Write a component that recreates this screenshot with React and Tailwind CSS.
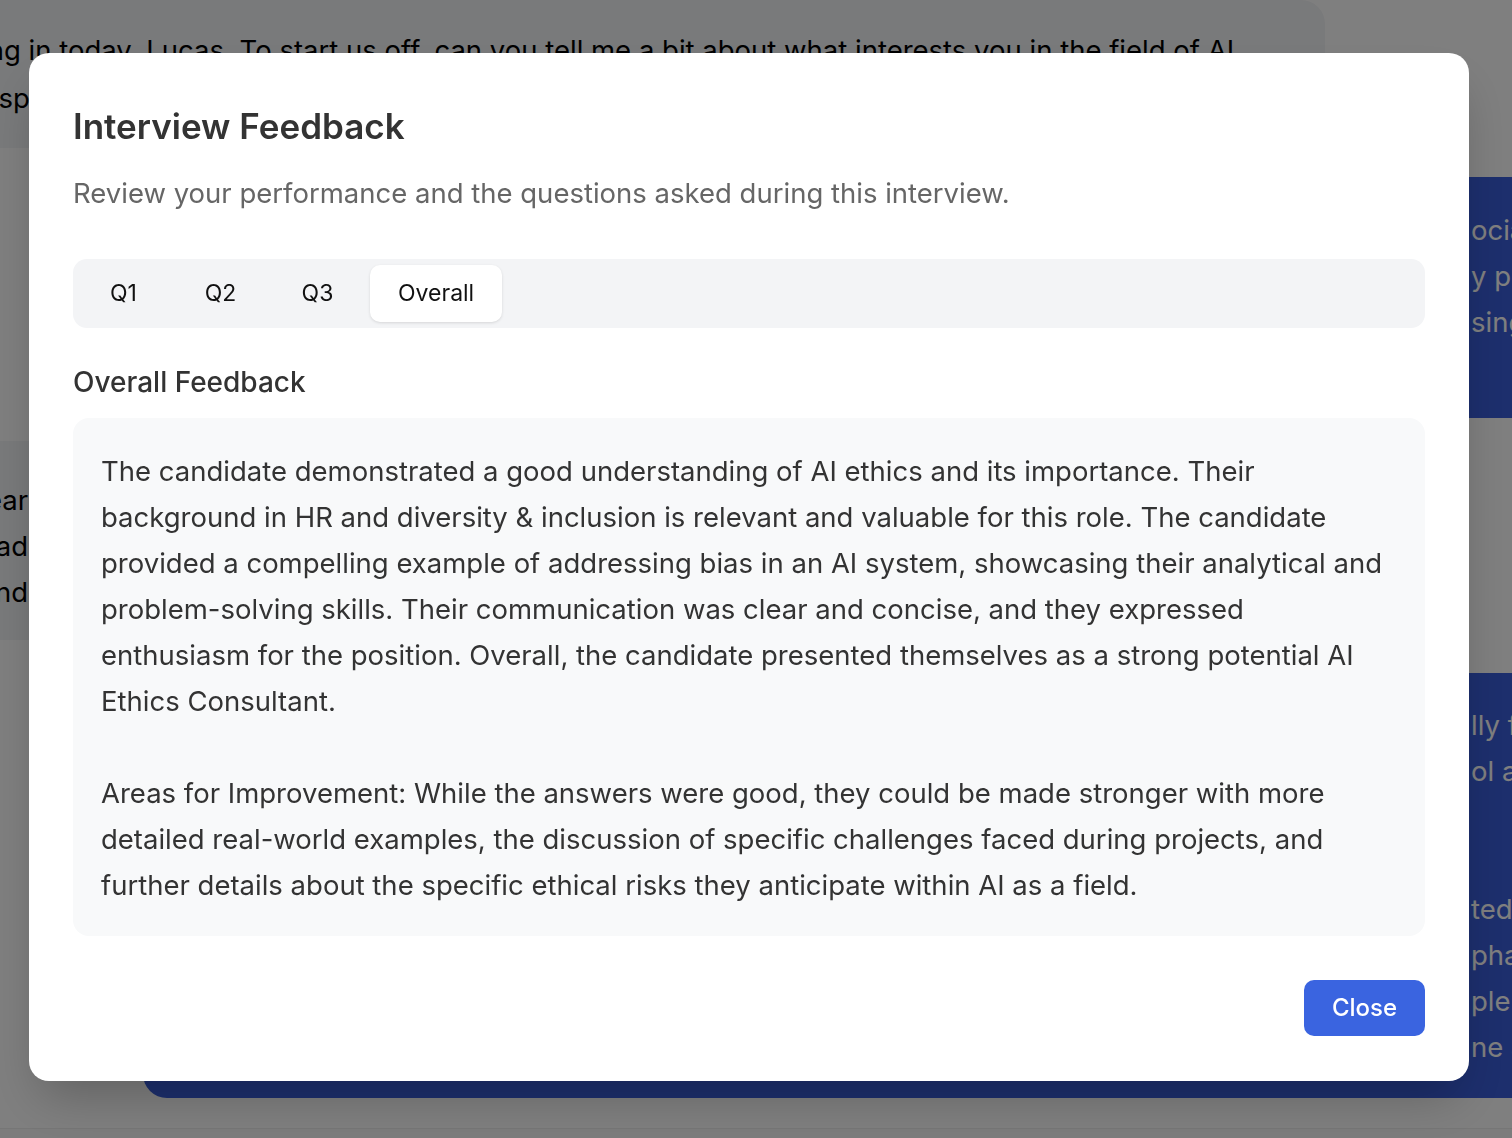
import React from "react";

const feedback = `The candidate demonstrated a good understanding of AI ethics and its importance. Their background in HR and diversity & inclusion is relevant and valuable for this role. The candidate provided a compelling example of addressing bias in an AI system, showcasing their analytical and problem-solving skills. Their communication was clear and concise, and they expressed enthusiasm for the position. Overall, the candidate presented themselves as a strong potential AI Ethics Consultant.

Areas for Improvement: While the answers were good, they could be made stronger with more detailed real-world examples, the discussion of specific challenges faced during projects, and further details about the specific ethical risks they anticipate within AI as a field.`;

function ChatBackground() {
  return (
    <div className="flex flex-col text-[27.5px]">
      {/* interviewer message */}
      <div className="ml-[-220px] w-[1545px] rounded-3xl bg-[#f3f4f6] pl-[8px] pt-[26px] pb-[26px] leading-[48px] text-black whitespace-nowrap">
        <p>Thanks for joining in today, Lucas. To start us off, can you tell me a bit about what interests you in the field of AI</p>
        <p className="-ml-[6px]">and ethics more specifically?</p>
      </div>

      {/* candidate answer */}
      <div className="mt-[29px] ml-[1000px] mr-[-300px] h-[241px] rounded-3xl bg-[#3a5edb] pl-[471px] pt-[30px] leading-[46px] text-white whitespace-nowrap">
        <p>ocial impact</p>
        <p>y personal</p>
        <p>sing</p>
      </div>

      {/* interviewer follow-up */}
      <div className="mt-[23px] ml-[-400px] w-[1000px] rounded-3xl bg-[#f3f4f6] pt-[36px] pb-[25px] leading-[46px] text-black">
        <div className="w-[428px] text-right whitespace-nowrap">
          <p>That makes it clear</p>
          <p>the background you had</p>
          <p>and</p>
        </div>
      </div>

      {/* candidate answer */}
      <div className="mt-[33px] ml-[143px] mr-[-300px] rounded-3xl bg-[#3a5edb] pl-[1328px] pt-[29px] pb-[28px] leading-[46px] text-white whitespace-nowrap">
        <p>lly focused</p>
        <p>ol and</p>
        <p>&nbsp;</p>
        <p>&nbsp;</p>
        <p>ted</p>
        <p>phasis</p>
        <p>plement</p>
        <p>ne and</p>
      </div>

      {/* input area */}
      <div className="mt-[30px] h-[80px] border-t border-[#ececec] bg-[#f9f9f9]" />
    </div>
  );
}

function Tabs() {
  const tabs = ["Q1", "Q2", "Q3", "Overall"];
  const active = "Overall";
  return (
    <div className="mt-[46px] flex gap-2 rounded-[14px] bg-[#f3f4f6] p-[6px]">
      {tabs.map((t) => (
        <button
          key={t}
          className={`h-[57px] min-w-[89px] rounded-[10px] px-[28px] text-[23px] text-[#111] ${
            t === active ? "bg-white shadow-[0_1px_3px_rgba(0,0,0,0.12)]" : ""
          }`}
        >
          {t}
        </button>
      ))}
    </div>
  );
}

function FeedbackModal() {
  return (
    <div className="fixed inset-0 flex items-start bg-black/50 pl-[29px] pt-[53px]">
      <div className="w-[1440px] rounded-[20px] bg-white px-[44px] pt-[53px] pb-[45px] shadow-2xl">
        <h2 className="text-[35px] font-semibold leading-[40px] text-[#333]">
          Interview Feedback
        </h2>
        <p className="mt-[27px] text-[27.5px] leading-[40px] text-[#666]">
          Review your performance and the questions asked during this interview.
        </p>

        <Tabs />

        <h3 className="mt-[36px] text-[28px] font-medium leading-[36px] text-[#333]">
          Overall Feedback
        </h3>
        <div className="mt-[18px] whitespace-pre-line rounded-2xl bg-[#f8f9fa] px-[28px] pt-[30px] pb-[28px] text-[27.5px] leading-[46px] text-[#333]">
          {feedback}
        </div>

        <div className="mt-[44px] flex justify-end">
          <button className="h-[56px] w-[121px] rounded-[10px] bg-[#3a64e0] text-[24px] font-medium text-white">
            Close
          </button>
        </div>
      </div>
    </div>
  );
}

export default function App() {
  return (
    <div className="relative h-screen w-full overflow-hidden bg-white font-['Inter','Noto_Sans',sans-serif]">
      <ChatBackground />
      <FeedbackModal />
    </div>
  );
}
